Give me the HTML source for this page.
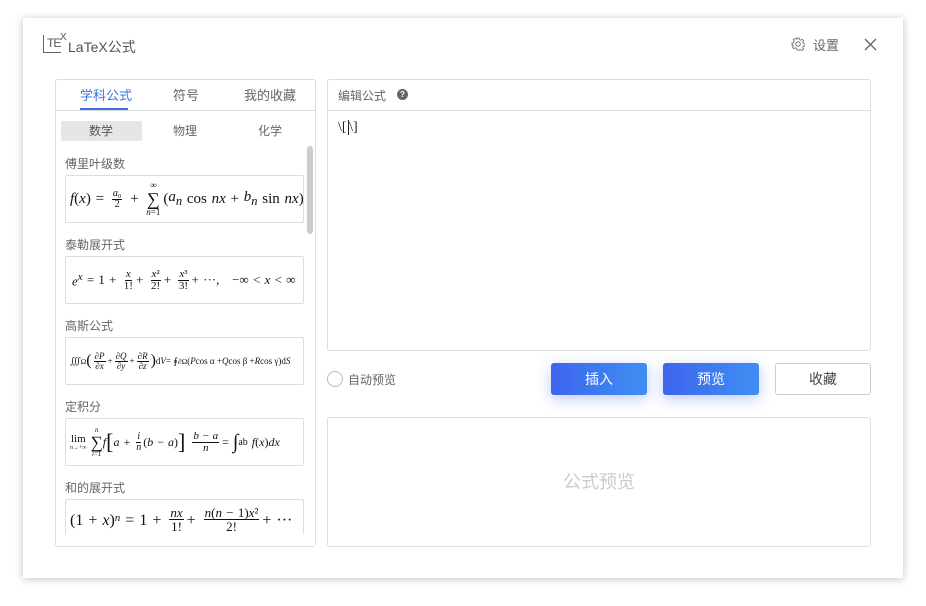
<!DOCTYPE html>
<html><head><meta charset="utf-8"><style>
*{margin:0;padding:0;box-sizing:border-box}
body{width:926px;height:606px;background:#fff;font-family:"Liberation Sans","Noto Sans CJK SC",sans-serif;position:relative;overflow:hidden}
.a{position:absolute}
.win{left:23px;top:18px;width:880px;height:560px;background:#fff;box-shadow:0 1px 8px rgba(0,0,0,.25)}
.lbl{font-size:12px;color:#666}
.box{left:65px;width:239px;height:48px;border:1px solid #ddd;border-radius:2px;overflow:hidden;font-family:"Liberation Serif","DejaVu Serif",serif;color:#111;white-space:nowrap;display:flex;align-items:center;padding-left:4px;word-spacing:1px}
.m i{font-style:italic}
.fr{display:inline-flex;flex-direction:column;align-items:center;vertical-align:middle;line-height:1}
.fr>span:first-child{border-bottom:1px solid #111;padding:0 1px}
.btn{top:363px;width:96px;height:32px;border-radius:3px;color:#fff;font-size:14px;text-align:center;line-height:32px;background:linear-gradient(90deg,#3d66ee,#3f8ef2);box-shadow:0 4px 14px rgba(70,110,240,.35)}
</style></head><body>
<div class="a win"></div>
<!-- header -->
<div class="a" style="left:43px;top:35px;width:18px;height:18px;border-left:1px solid #666;border-bottom:1px solid #666"></div>
<div class="a" style="left:47px;top:37px;font-size:12px;color:#555;font-family:'Liberation Sans';letter-spacing:-1px;line-height:12px">TE</div>
<div class="a" style="left:60px;top:33px;font-size:10px;color:#555;line-height:10px">X</div>
<div class="a" style="left:68px;top:37px;font-size:14px;color:#555">LaTeX公式</div>
<svg class="a" style="left:791px;top:37px" width="14" height="14" viewBox="0 0 14 14"><circle cx="7" cy="7" r="2.3" fill="none" stroke="#777"/><path d="M6 1h2l.4 1.6 1.4.6 1.4-.9 1.4 1.4-.9 1.4.6 1.4 1.6.4v2l-1.6.4-.6 1.4.9 1.4-1.4 1.4-1.4-.9-1.4.6L8 13H6l-.4-1.6-1.4-.6-1.4.9-1.4-1.4.9-1.4-.6-1.4L1 8V6l1.6-.4.6-1.4-.9-1.4 1.4-1.4 1.4.9 1.4-.6z" fill="none" stroke="#777" stroke-width=".9"/></svg>
<div class="a" style="left:813px;top:35px;font-size:13px;color:#666">设置</div>
<svg class="a" style="left:864px;top:38px" width="13" height="13"><path d="M1 1L12 12M12 1L1 12" stroke="#666" stroke-width="1.3"/></svg>
<!-- left panel -->
<div class="a" style="left:55px;top:79px;width:261px;height:468px;border:1px solid #ddd;border-radius:3px"></div>
<div class="a" style="left:56px;top:110px;width:259px;height:1px;background:#ddd"></div>
<div class="a" style="left:80px;top:85px;font-size:13px;color:#3b70e0">学科公式</div>
<div class="a" style="left:80px;top:108px;width:48px;height:2px;background:#3b70e0"></div>
<div class="a" style="left:173px;top:85px;font-size:13px;color:#666">符号</div>
<div class="a" style="left:244px;top:85px;font-size:13px;color:#666">我的收藏</div>
<div class="a" style="left:61px;top:121px;width:81px;height:20px;background:#e6e6e6;border-radius:2px"></div>
<div class="a" style="left:89px;top:122px;font-size:12px;color:#555">数学</div>
<div class="a" style="left:173px;top:122px;font-size:12px;color:#666">物理</div>
<div class="a" style="left:258px;top:122px;font-size:12px;color:#666">化学</div>
<div class="a" style="left:307px;top:146px;width:6px;height:88px;background:#ccc;border-radius:3px"></div>

<div class="a lbl" style="left:65px;top:155px">傅里叶级数</div>
<div class="a box m" style="top:175px;font-size:15px"><i>f</i>(<i>x</i>)&nbsp;=&nbsp;<span class="fr" style="font-size:10px;margin:0 3px"><span><i>a</i>₀</span><span>2</span></span>&nbsp;+&nbsp;<span class="fr" style="font-size:9px;margin:0 3px"><span style="border:none">∞</span><span style="font-size:18px">∑</span><span><i>n</i>=1</span></span>(<i>a<sub>n</sub></i>&nbsp;cos&nbsp;<i>nx</i>&nbsp;+&nbsp;<i>b<sub>n</sub></i>&nbsp;sin&nbsp;<i>nx</i>)</div>
<div class="a lbl" style="left:65px;top:236px">泰勒展开式</div>
<div class="a box m" style="top:256px;font-size:13px;padding-left:6px"><i>e<sup>x</sup></i>&nbsp;=&nbsp;1&nbsp;+&nbsp;<span class="fr" style="font-size:11px;margin:0 3px"><span><i>x</i></span><span>1!</span></span>+&nbsp;<span class="fr" style="font-size:11px;margin:0 3px"><span><i>x</i>²</span><span>2!</span></span>+&nbsp;<span class="fr" style="font-size:11px;margin:0 3px"><span><i>x</i>³</span><span>3!</span></span>+&nbsp;···,&nbsp;&nbsp;&nbsp;−∞&nbsp;&lt;&nbsp;<i>x</i>&nbsp;&lt;&nbsp;∞</div>
<div class="a lbl" style="left:65px;top:317px">高斯公式</div>
<div class="a box m" style="top:337px;font-size:9px;word-spacing:0">∭<sub>Ω</sub><span style="font-size:16px">(</span><span class="fr" style="margin:0 2px"><span>∂<i>P</i></span><span>∂<i>x</i></span></span>+<span class="fr" style="margin:0 2px"><span>∂<i>Q</i></span><span>∂<i>y</i></span></span>+<span class="fr" style="margin:0 2px"><span>∂<i>R</i></span><span>∂<i>z</i></span></span><span style="font-size:16px">)</span>d<i>V</i> = ∮<sub>∂Ω</sub>(<i>P</i> cos α + <i>Q</i> cos β + <i>R</i> cos γ)d<i>S</i></div>
<div class="a lbl" style="left:65px;top:398px">定积分</div>
<div class="a box m" style="top:418px;font-size:12px"><span class="fr" style="font-size:11px"><span style="border:none">lim</span><span style="font-size:6px"><i>n</i>→+∞</span></span>&nbsp;<span class="fr" style="font-size:7px"><span style="border:none"><i>n</i></span><span style="font-size:17px">∑</span><span><i>i</i>=1</span></span><i>f</i><span style="font-size:22px">[</span><i>a</i>&nbsp;+&nbsp;<span class="fr" style="font-size:10px;margin:0 2px"><span><i>i</i></span><span><i>n</i></span></span>(<i>b</i>&nbsp;−&nbsp;<i>a</i>)<span style="font-size:22px">]</span>&nbsp;<span class="fr" style="font-size:11px;margin:0 3px"><span><i>b</i>&nbsp;−&nbsp;<i>a</i></span><span><i>n</i></span></span>=&nbsp;<span style="font-size:20px">∫</span><sub>a</sub><sup>b</sup>&nbsp;<i>f</i>(<i>x</i>)<i>dx</i></div>
<div class="a lbl" style="left:65px;top:479px">和的展开式</div>
<div class="a box m" style="top:499px;height:36px;font-size:16px;align-items:flex-start;padding-top:12px;border-bottom:none">(1&nbsp;+&nbsp;<i>x</i>)<sup style="font-size:11px"><i>n</i></sup>&nbsp;=&nbsp;1&nbsp;+&nbsp;<span class="fr" style="font-size:13px;margin:0 3px;vertical-align:top;margin-top:-6px"><span><i>nx</i></span><span>1!</span></span>+&nbsp;<span class="fr" style="font-size:13px;margin:0 3px;vertical-align:top;margin-top:-6px"><span><i>n</i>(<i>n</i>&nbsp;−&nbsp;1)<i>x</i>²</span><span>2!</span></span>+&nbsp;···</div>
<div class="a" style="left:56px;top:535px;width:259px;height:11px;background:#fff"></div>

<!-- editor -->
<div class="a" style="left:327px;top:79px;width:544px;height:272px;border:1px solid #ddd;border-radius:3px"></div>
<div class="a" style="left:328px;top:110px;width:542px;height:1px;background:#ddd"></div>
<div class="a" style="left:338px;top:87px;font-size:12px;color:#666">编辑公式</div>
<div class="a" style="left:397px;top:89px;width:11px;height:11px;border-radius:50%;background:#666;color:#fff;font-size:8px;text-align:center;line-height:11px;font-weight:bold">?</div>
<div class="a" style="left:338px;top:120px;font-size:14px;color:#222;font-family:'Liberation Serif',serif">\[&nbsp;<span style="border-left:1px solid #222;margin-left:-2px"></span>\]</div>
<div class="a" style="left:327px;top:371px;width:16px;height:16px;border:1px solid #bbb;border-radius:50%"></div>
<div class="a" style="left:348px;top:371px;font-size:12px;color:#666">自动预览</div>
<div class="a btn" style="left:551px">插入</div>
<div class="a btn" style="left:663px">预览</div>
<div class="a" style="left:775px;top:363px;width:96px;height:32px;border:1px solid #ccc;border-radius:3px;font-size:14px;color:#444;text-align:center;line-height:30px">收藏</div>
<div class="a" style="left:327px;top:417px;width:544px;height:130px;border:1px solid #ddd;border-radius:3px;text-align:center;line-height:128px;font-size:18px;color:#ccc">公式预览</div>
</body></html>
